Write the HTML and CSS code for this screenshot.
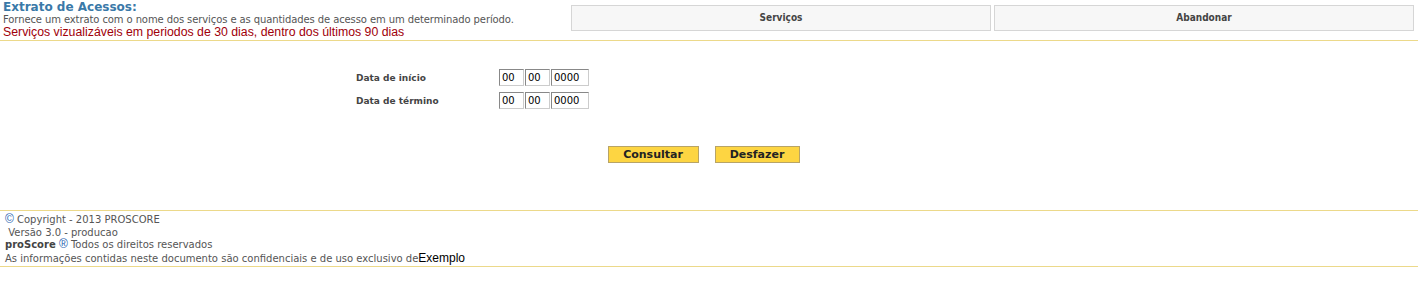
FILE: index.html
```html
<html lang="pt">
<head>
<meta charset="utf-8">
<link rel="stylesheet" href="styles.css">
</head>
<body>
    <div class="page">
        <div class="header">
            <div class="header-text">
                <div class="title">Extrato de Acessos:</div>
                <div class="subtitle">Fornece um extrato com o nome dos serviços e as quantidades de acesso em um determinado período.</div>
                <div class="warning">Serviços vizualizáveis em periodos de 30 dias, dentro dos últimos 90 dias</div>
            </div>
            <div class="menu">
                <div class="menu-item">Serviços</div>
                <div class="menu-item">Abandonar</div>
            </div>
        </div>

        <div class="form">
            <div class="row">
                <span class="label">Data de início</span>
                <input class="field day" value="00">
                <input class="field month" value="00">
                <input class="field year" value="0000">
            </div>
            <div class="row">
                <span class="label">Data de término</span>
                <input class="field day" value="00">
                <input class="field month" value="00">
                <input class="field year" value="0000">
            </div>

            <div class="actions">
                <button class="button consultar">Consultar</button>
                <button class="button desfazer">Desfazer</button>
            </div>
        </div>

        <div class="footer">
            <div><span class="mark">&copy;</span> Copyright - 2013 PROSCORE</div>
            <div>&nbsp;Versão 3.0 - producao</div>
            <div><b>proScore</b> <span class="mark">&reg;</span> Todos os direitos reservados</div>
            <div>As informações contidas neste documento são confidenciais e de uso exclusivo de<span class="client">Exemplo</span></div>
        </div>
    </div>
</body>
</html>
```

FILE: styles.css
```css
body {
    margin: 0;
    background: #fff;
    font-family: "DejaVu Sans", Verdana, sans-serif;
    color: #555;
}

.page {
    width: 1418px;
}

.header {
    display: flex;
    height: 40px;
    border-bottom: 1px solid #ecd98a;
}

.header-text {
    width: 571px;
    padding-left: 3px;
    box-sizing: border-box;
}

.title {
    font-size: 12px;
    font-weight: bold;
    color: #3a79a8;
    line-height: 13px;
    margin-top: 1px;
}

.subtitle {
    font-size: 10px;
    letter-spacing: -0.1px;
    line-height: 11px;
    color: #555;
}

.warning {
    font-family: "Liberation Sans", Arial, sans-serif;
    font-size: 12.3px;
    line-height: 14px;
    color: #a0000a;
}

.menu {
    display: flex;
    gap: 3px;
    padding-top: 5px;
}

.menu-item {
    width: 418px;
    height: 24px;
    line-height: 24px;
    text-align: center;
    background: #f7f7f7;
    border: 1px solid #d6d6d6;
    font-family: "DejaVu Sans Condensed", "DejaVu Sans", sans-serif;
    font-size: 10px;
    font-weight: bold;
    color: #444;
}

.form {
    padding-top: 28px;
    height: 169px;
    box-sizing: border-box;
}

.row {
    display: flex;
    align-items: center;
    padding-left: 356px;
    height: 17px;
    margin-bottom: 6px;
}

.label {
    width: 143px;
    font-size: 9px;
    font-weight: bold;
    color: #444;
}

.field {
    box-sizing: border-box;
    height: 17px;
    margin: 0 1px 0 0;
    padding: 0 2px;
    border: 1px solid #888;
    border-right-color: #ccc;
    border-bottom-color: #ccc;
    font-family: "DejaVu Sans", Verdana, sans-serif;
    font-size: 10px;
    color: #000;
}

.day, .month {
    width: 25px;
}

.year {
    width: 38px;
}

.actions {
    display: flex;
    justify-content: center;
    gap: 16px;
    margin-top: 37px;
    padding-right: 11px;
}

.button {
    height: 17px;
    padding: 0;
    background: #fdd542;
    border: 1px solid #b8a466;
    font-family: "DejaVu Sans", Verdana, sans-serif;
    font-size: 11px;
    font-weight: bold;
    color: #222;
}

.consultar {
    width: 91px;
}

.desfazer {
    width: 85px;
}

.footer {
    border-top: 1px solid #ecd98a;
    border-bottom: 1px solid #ecd98a;
    padding: 3px 0 1px 5px;
    font-size: 10px;
    line-height: 12.5px;
    color: #555;
}

.footer b {
    color: #444;
}

.mark {
    font-family: "Liberation Sans", Arial, sans-serif;
    color: #1f5fb0;
    font-size: 12px;
    line-height: 10px;
}

.client {
    font-family: "Liberation Sans", Arial, sans-serif;
    font-size: 12px;
    color: #000;
}
```
